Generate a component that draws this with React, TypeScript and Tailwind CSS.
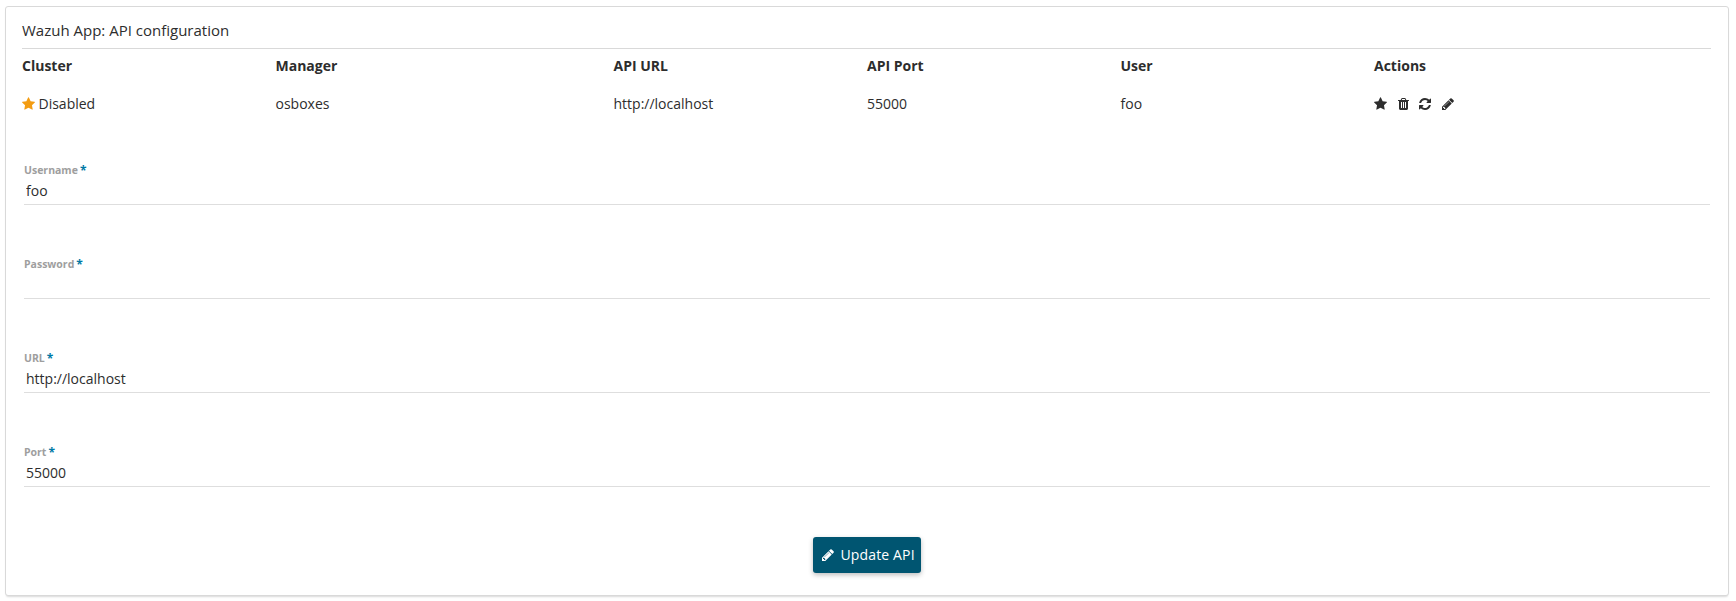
import React from "react";

const PATHS = {
  star: "M1728 647q0 22-26 48l-363 354 86 500q1 7 1 20 0 21-10.5 35.5t-30.5 14.5q-19 0-40-12l-449-236-449 236q-22 12-40 12-21 0-31.5-14.5t-10.5-35.5q0-6 2-20l86-500-364-354q-25-27-25-48 0-37 56-46l502-73 225-455q19-41 49-41t49 41l225 455 502 73q56 9 56 46z",
  trash:
    "M704 1376v-704q0-14-9-23t-23-9h-64q-14 0-23 9t-9 23v704q0 14 9 23t23 9h64q14 0 23-9t9-23zm256 0v-704q0-14-9-23t-23-9h-64q-14 0-23 9t-9 23v704q0 14 9 23t23 9h64q14 0 23-9t9-23zm256 0v-704q0-14-9-23t-23-9h-64q-14 0-23 9t-9 23v704q0 14 9 23t23 9h64q14 0 23-9t9-23zm-544-992h448l-48-117q-7-9-17-11h-317q-10 2-17 11zm928 32v64q0 14-9 23t-23 9h-96v948q0 83-47 143.5t-113 60.5h-832q-66 0-113-58.5t-47-141.5v-952h-96q-14 0-23-9t-9-23v-64q0-14 9-23t23-9h309l70-167q15-37 54-63t79-26h320q40 0 79 26t54 63l70 167h309q14 0 23 9t9 23z",
  refresh:
    "M1639 1056q0 5-1 7-64 268-268 434.5t-478 166.5q-146 0-282.5-55t-243.5-157l-129 129q-19 19-45 19t-45-19-19-45v-448q0-26 19-45t45-19h448q26 0 45 19t19 45-19 45l-137 137q71 66 161 102t187 36q134 0 250-65t186-179q11-17 53-117 8-23 30-23h192q13 0 22.5 9.5t9.5 22.5zm25-800v448q0 26-19 45t-45 19h-448q-26 0-45-19t-19-45 19-45l138-138q-148-137-349-137-134 0-250 65t-186 179q-11 17-53 117-8 23-30 23h-199q-13 0-22.5-9.5t-9.5-22.5v-7q65-268 270-434.5t480-166.5q146 0 284 55.5t245 156.5l130-129q19-19 45-19t45 19 19 45z",
  pencil:
    "M491 1536l91-91-235-235-91 91v107h128v128h107zm523-928q0-22-22-22-10 0-17 7l-542 542q-7 7-7 17 0 22 22 22 10 0 17-7l542-542q7-7 7-17zm-54-192l416 416-832 832h-416v-416zm683 96q0 53-37 90l-166 166-416-416 166-165q36-38 90-38 53 0 91 38l235 234q37 39 37 91z",
};

const VIEW_BOXES = {
  star: "64 0 1664 1792",
  trash: "192 0 1408 1792",
  refresh: "128 0 1536 1792",
  pencil: "128 0 1536 1792",
};

function Icon({ name, className }: { name: keyof typeof PATHS; className: string }) {
  return (
    <svg viewBox={VIEW_BOXES[name]} fill="currentColor" className={`h-[14px] shrink-0 ${className}`} aria-hidden="true">
      <path d={PATHS[name]} />
    </svg>
  );
}

function Field({ label, value, type = "text" }: { label: string; value: string; type?: string }) {
  return (
    <label className="block h-[94px]">
      <span className="flex h-[15px] items-start pt-px text-[10.5px] leading-[14px] font-bold text-[#9e9e9e]">
        {label}
        <span className="ml-[2px] text-[12px] leading-[15px] text-[#0079a5]">*</span>
      </span>
      <input
        type={type}
        defaultValue={value}
        className="block h-[28px] w-full border-b border-[#dedede] bg-transparent px-[2px] pb-px text-[14px] text-[#2d2d2d] outline-none"
      />
    </label>
  );
}

const GRID = "grid grid-cols-[15%_20%_15%_15%_15%_20%]";

export default function App() {
  return (
    <div className="h-[601px] bg-white pt-[6px] pr-[7px] pl-[5px] font-['Open_Sans','Noto_Sans',sans-serif] text-[14px] text-[#2d2d2d]">
      <section className="flex h-[590px] flex-col rounded-[3px] border border-[#d9d9d9] bg-white px-4 pt-[11px] shadow-[0_2px_2px_-1px_rgba(0,0,0,0.15)]">
        <h1 className="mr-px h-[31px] border-b border-[#d9d9d9] text-[15px] leading-6">Wazuh App: API configuration</h1>
        <div className={`${GRID} h-[32px] items-center font-bold`}>
          <span>Cluster</span>
          <span>Manager</span>
          <span>API URL</span>
          <span>API Port</span>
          <span>User</span>
          <span>Actions</span>
        </div>
        <div className={`${GRID} h-[44px] items-center`}>
          <span className="flex items-center">
            <Icon name="star" className="mt-[2px] mr-[3.5px] w-[13px] text-[#f39c12]" />
            Disabled
          </span>
          <span>osboxes</span>
          <span>http://localhost</span>
          <span>55000</span>
          <span>foo</span>
          <span className="flex items-center pt-[2px]">
            <Icon name="star" className="w-[13px]" />
            <Icon name="trash" className="ml-[11px] w-[11px]" />
            <Icon name="refresh" className="ml-[10px] w-[12px]" />
            <Icon name="pencil" className="ml-[11px] w-[12px]" />
          </span>
        </div>
        <form className="flex flex-col px-[2px] pt-[37px]">
          <Field label="Username" value="foo" />
          <Field label="Password" value="" type="password" />
          <Field label="URL" value="http://localhost" />
          <Field label="Port" value="55000" />
          <button
            type="button"
            className="-mt-px -ml-px flex h-9 w-[108px] items-center self-center rounded-[3px] bg-[#005571] pb-px pl-[9px] text-[14px] tracking-[0.01em] whitespace-nowrap text-white shadow-[0_2px_5px_0_rgba(0,0,0,0.26)]"
          >
            <Icon name="pencil" className="mr-[7px] w-[12px]" />
            Update API
          </button>
        </form>
      </section>
    </div>
  );
}
